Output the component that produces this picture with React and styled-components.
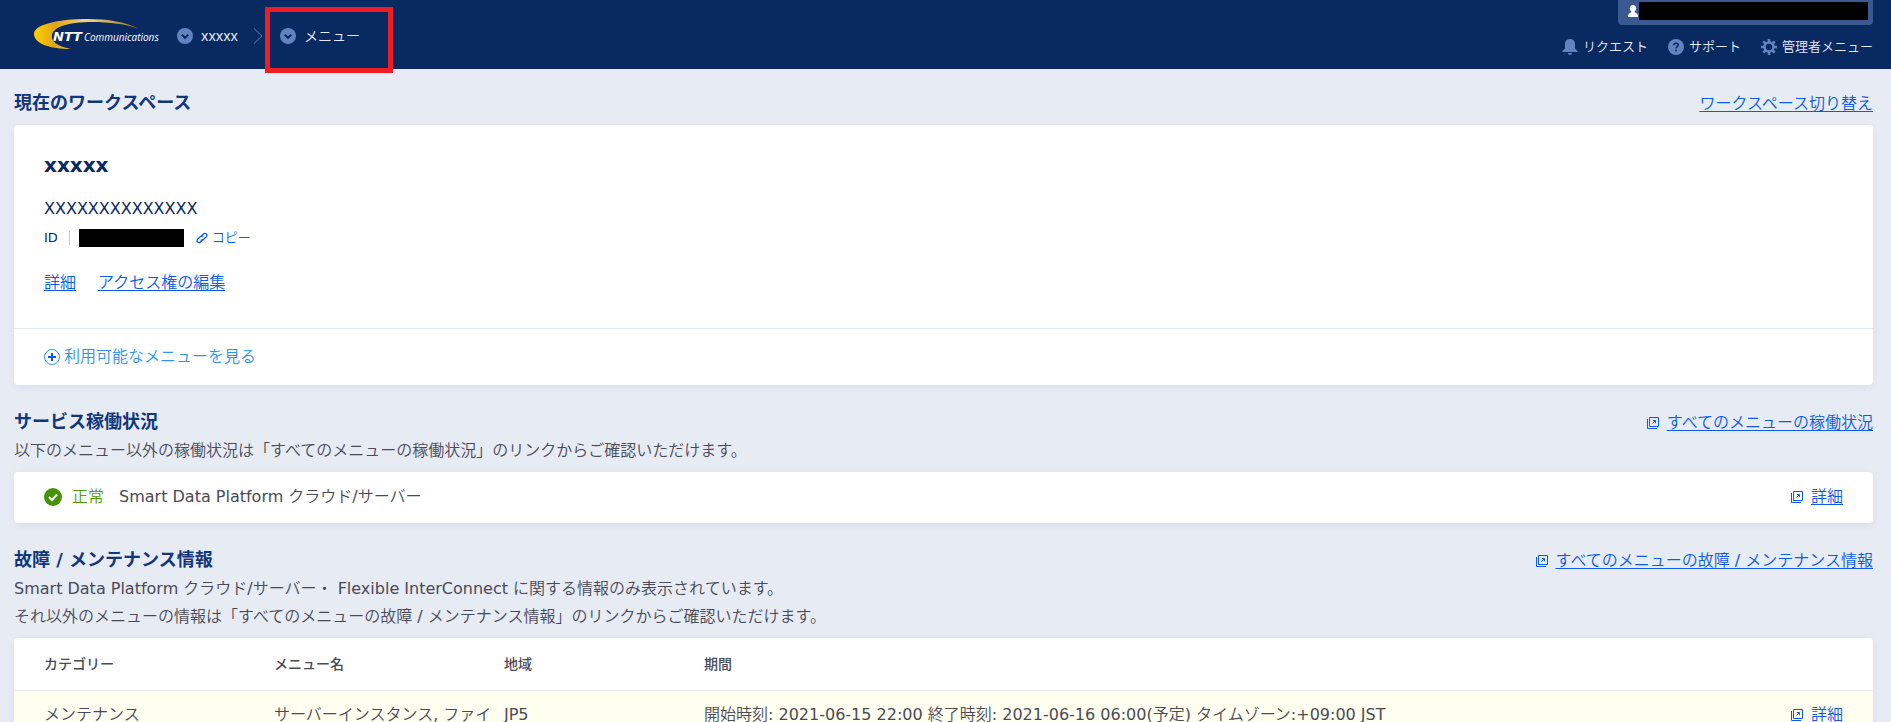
import React from 'react'
import styled, { createGlobalStyle } from 'styled-components'

const GlobalStyle = createGlobalStyle`
  * {
    box-sizing: border-box;
  }
  body {
    margin: 0;
    overflow-x: hidden;
    background-color: #e6ebf4;
    color: #4a4a57;
    font-family: 'DejaVu Sans', 'Noto Sans CJK JP DemiLight', 'Noto Sans CJK JP', sans-serif;
    font-size: 16px;
    font-weight: 400;
    line-height: 28px;
  }
  h1, h2, p {
    margin: 0;
  }
`

const boldFont = "'DejaVu Sans', 'Noto Sans CJK JP', sans-serif"

const Header = styled.header`
  display: flex;
  justify-content: space-between;
  height: 69px;
  padding: 0 18px 0 32px;
  background-color: #092961;
`
const Breadcrumb = styled.nav`
  display: flex;
  align-items: center;
  padding-top: 3px;
`
const Logo = styled.svg`
  width: 128px;
  height: 36px;
  margin: 0 17px 4px 0;
`
const CrumbButton = styled.button`
  display: flex;
  align-items: center;
  gap: 8px;
  padding: 0;
  border: 0;
  background: none;
  color: #e6ebf4;
  font-family: 'Noto Sans', 'Noto Sans CJK JP DemiLight', 'Noto Sans CJK JP', sans-serif;
  font-size: 14px;
  line-height: 20px;
  cursor: pointer;
`
const Separator = styled.svg`
  width: 10px;
  height: 16px;
  margin: 0 2px 0 15px;
`
const Highlight = styled.div`
  display: flex;
  align-items: center;
  width: 128px;
  height: 66px;
  padding: 0 0 8px 10px;
  margin-top: 8px;
  border: 5px solid #ee1c24;
  z-index: 1;
`
const HeaderRight = styled.div`
  display: flex;
  flex-direction: column;
  align-items: flex-end;
  gap: 11px;
`
const UserBox = styled.div`
  display: flex;
  align-items: flex-start;
  width: 255px;
  height: 25px;
  padding: 2px 5px 0 10px;
  border-radius: 0 0 4px 4px;
  background-color: #3a5990;
`
const UserIcon = styled.svg`
  width: 11px;
  height: 18px;
`
const Masked = styled.span`
  flex: ${(props) => (props.$width ? 'none' : 1)};
  width: ${(props) => props.$width};
  height: 18px;
  background-color: #000;
`
const Tools = styled.nav`
  display: flex;
  gap: 20px;
`
const Tool = styled.a`
  display: flex;
  align-items: center;
  gap: 5px;
  color: #e6ebf4;
  font-size: 13px;
  line-height: 22px;
  text-decoration: none;
`
const Icon = styled.svg`
  flex: none;
  width: ${(props) => props.$size || 16}px;
  height: ${(props) => props.$size || 16}px;
`

const Main = styled.main`
  padding: 19px 18px 0 14px;
`
const Section = styled.section`
  margin-bottom: 22px;
`
const SectionHead = styled.div`
  display: flex;
  align-items: flex-end;
  justify-content: space-between;
  min-height: 30px;
`
const Title = styled.h1`
  color: #12367c;
  font-family: ${boldFont};
  font-size: 18px;
  font-weight: 700;
  line-height: 28px;
  margin-bottom: 1px;
`
const Lead = styled.p`
  margin-bottom: 7px;
`
const Card = styled.div`
  margin-top: ${(props) => props.$top || 0};
  border-radius: 4px;
  background-color: #fff;
  box-shadow: 0 2px 8px rgba(9, 41, 97, 0.06);
  overflow: hidden;
`
const LinkGroup = styled.span`
  display: inline-flex;
  align-items: center;
  gap: 8px;
`
const Link = styled.a`
  color: #0b5be8;
  text-decoration: underline;
  text-underline-offset: 2px;
`

const WorkspaceBody = styled.div`
  padding: 26px 30px 31px;
`
const WorkspaceName = styled.h2`
  margin-bottom: 15px;
  color: #092961;
  font-family: ${boldFont};
  font-size: 20px;
  font-weight: 700;
  line-height: 28px;
`
const WorkspaceText = styled.p`
  color: #092961;
  line-height: 30px;
`
const IdRow = styled.div`
  display: flex;
  align-items: center;
  margin-bottom: 17px;
  color: #092961;
  font-size: 13px;
`
const IdLabel = styled.span`
  padding-right: 11px;
  margin-right: 9px;
  border-right: 1px solid #c4c9d2;
  line-height: 14px;
`
const CopyButton = styled.button`
  display: flex;
  align-items: center;
  gap: 4px;
  padding: 0;
  margin-left: 12px;
  border: 0;
  background: none;
  color: #0b5be8;
  font: inherit;
  cursor: pointer;
`
const WorkspaceLinks = styled.div`
  display: flex;
  gap: 22px;
`
const WorkspaceFoot = styled.div`
  display: flex;
  padding: 14px 30px;
  border-top: 1px solid #e6ebf4;
`
const MenuLink = styled.a`
  display: flex;
  align-items: center;
  gap: 4px;
  color: #2b95ee;
  text-decoration: none;
`

const StatusRow = styled.div`
  display: flex;
  align-items: center;
  justify-content: space-between;
  padding: 11px 30px 12px;
`
const Status = styled.div`
  display: flex;
  align-items: center;
`
const StatusLabel = styled.span`
  margin: 0 15px 0 10px;
  color: #4c9e08;
`

const Table = styled.table`
  width: 100%;
  border-collapse: collapse;
  table-layout: fixed;
`
const HeadCell = styled.th`
  width: ${(props) => props.$width};
  padding: 12px 0 12px ${(props) => (props.$first ? '30px' : '0')};
  font-family: ${boldFont};
  font-size: 14px;
  font-weight: 500;
  text-align: left;
`
const Row = styled.tr`
  border-top: 1px solid #e6ebf4;
  background-color: #fffff0;
`
const Cell = styled.td`
  padding: ${(props) => (props.$first ? '10px 0 10px 30px' : '10px 0')};
  vertical-align: top;
`
const LinkCell = styled(Cell)`
  padding-right: 30px;
  text-align: right;
`

const columns = [
  { label: 'カテゴリー', width: '260px' },
  { label: 'メニュー名', width: '230px' },
  { label: '地域', width: '200px' },
  { label: '期間' },
]

const incidents = [
  {
    id: 1,
    category: 'メンテナンス',
    menu: 'サーバーインスタンス, ファイ',
    region: 'JP5',
    period:
      '開始時刻: 2021-06-15 22:00 終了時刻: 2021-06-16 06:00(予定) タイムゾーン:+09:00 JST',
  },
]

const CircleDown = () => (
  <Icon viewBox='0 0 16 16' aria-hidden='true'>
    <circle cx='8' cy='8' r='8' fill='#6283bf' />
    <path d='M4.8 6.8 8 9.8l3.2-3' fill='none' stroke='#092961' strokeWidth='2' />
  </Icon>
)

const ExternalLink = ({ children }) => (
  <LinkGroup>
    <Icon $size={12} viewBox='0 0 12 12' fill='none' stroke='#0b5be8' aria-hidden='true'>
      <path d='M2.5.5h9v9h-9zM.5 2v9.5H10' />
      <path d='M5.500 6.500 8 4M5.800 3.500h2.700v2.700' />
    </Icon>
    <Link href='#'>{children}</Link>
  </LinkGroup>
)

const BrandLogo = () => (
  <Logo viewBox='0 0 128 36' role='img' aria-label='NTT Communications'>
    <defs>
      <linearGradient id='swoosh' x1='0' y1='0' x2='1' y2='0'>
        <stop offset='0' stopColor='#ffd200' />
        <stop offset='0.2' stopColor='#e0a316' />
        <stop offset='0.5' stopColor='#f3d48c' />
        <stop offset='1' stopColor='#a87410' />
      </linearGradient>
    </defs>
    <path
      d='M107 13C94 6 76 3 56 3 24 3 2 9 2 18c0 8 12 15 37 15-15-3-20-8-19-14C22 10 38 6 60 6c18 0 34 2 47 7z'
      fill='url(#swoosh)'
    />
    <text x='21' y='25' fill='#fff' fontFamily='DejaVu Sans, sans-serif' fontSize='13' fontWeight='700' fontStyle='italic'>
      NTT
    </text>
    <text x='52' y='25' fill='#fff' fontFamily='Open Sans, sans-serif' fontSize='10' fontWeight='500' fontStyle='italic'>
      Communications
    </text>
  </Logo>
)

const HeaderBar = () => (
  <Header>
    <Breadcrumb>
      <BrandLogo />
      <CrumbButton>
        <CircleDown />
        xxxxx
      </CrumbButton>
      <Separator viewBox='0 0 10 16' aria-hidden='true'>
        <path d='M1 .5 9 8l-8 7.5' fill='none' stroke='#5f83c2' />
      </Separator>
      <Highlight>
        <CrumbButton>
          <CircleDown />
          メニュー
        </CrumbButton>
      </Highlight>
    </Breadcrumb>
    <HeaderRight>
      <UserBox>
        <UserIcon viewBox='0 0 11 18' fill='#fff' aria-hidden='true'>
          <path d='M5 3c2 0 3.200 1.300 3.200 3.200 0 1.300-.6 2.400-1.400 3V10.500C8.800 11 10 12 10 15H0c0-3 1.200-4 3.200-4.500V9.200c-.8-.6-1.400-1.700-1.400-3C1.800 4.300 3 3 5 3z' />
        </UserIcon>
        <Masked />
      </UserBox>
      <Tools>
        <Tool href='#'>
          <Icon viewBox='0 0 16 16' fill='#6283bf' aria-hidden='true'>
            <path d='M8 0C5 0 3 2.200 3 5v4.500L.5 12v1h15v-1L13 9.500V5c0-2.800-2-5-5-5zM6 14h4c0 1.200-.8 2-2 2s-2-.8-2-2z' />
          </Icon>
          リクエスト
        </Tool>
        <Tool href='#'>
          <Icon viewBox='0 0 16 16' aria-hidden='true'>
            <circle cx='8' cy='8' r='8' fill='#6283bf' />
            <path d='M5.800 6.300C5.900 4.900 6.800 4.200 8 4.200s2.300.7 2.300 1.900C10.300 7.600 8 7.700 8 9.500' fill='none' stroke='#092961' strokeWidth='1.600' />
            <circle cx='8' cy='11.600' r='1' fill='#092961' />
          </Icon>
          サポート
        </Tool>
        <Tool href='#'>
          <Icon viewBox='0 0 16 16' fill='none' stroke='#6283bf' aria-hidden='true'>
            <circle cx='8' cy='8' r='4.500' strokeWidth='2.600' />
            <path
              d='M8 0v3M8 13v3M0 8h3M13 8h3M2.300 2.300l2.200 2.200M11.500 11.500l2.200 2.200M2.300 13.700l2.200-2.200M11.500 4.500l2.200-2.200'
              strokeWidth='2.600'
            />
          </Icon>
          管理者メニュー
        </Tool>
      </Tools>
    </HeaderRight>
  </Header>
)

const App = () => {
  return (
    <>
      <GlobalStyle />
      <HeaderBar />
      <Main>
        <Section>
          <SectionHead>
            <Title>現在のワークスペース</Title>
            <Link href='#'>ワークスペース切り替え</Link>
          </SectionHead>
          <Card $top='7px'>
            <WorkspaceBody>
              <WorkspaceName>xxxxx</WorkspaceName>
              <WorkspaceText>XXXXXXXXXXXXXX</WorkspaceText>
              <IdRow>
                <IdLabel>ID</IdLabel>
                <Masked $width='105px' />
                <CopyButton>
                  <Icon $size={12} viewBox='0 0 12 12' fill='none' stroke='#0b5be8' strokeWidth='1.300' aria-hidden='true'>
                    <path d='M5 4.500 7.200 2.300c1-1 2.300-1.200 3.200-.4s.7 2.100-.3 3.100L7.400 7.500c-.9.900-2 .9-2.600.1' />
                    <path d='M7 7.500 4.800 9.700c-1 1-2.300 1.200-3.200.4s-.7-2.100.3-3.100l2.700-2.500c.9-.9 2-.9 2.600-.1' />
                  </Icon>
                  コピー
                </CopyButton>
              </IdRow>
              <WorkspaceLinks>
                <Link href='#'>詳細</Link>
                <Link href='#'>アクセス権の編集</Link>
              </WorkspaceLinks>
            </WorkspaceBody>
            <WorkspaceFoot>
              <MenuLink href='#'>
                <Icon viewBox='0 0 16 16' fill='none' aria-hidden='true'>
                  <circle cx='8' cy='8' r='7.500' stroke='#2b95ee' />
                  <path d='M8 4v8M4 8h8' stroke='#0b5be8' strokeWidth='2' />
                </Icon>
                利用可能なメニューを見る
              </MenuLink>
            </WorkspaceFoot>
          </Card>
        </Section>

        <Section>
          <SectionHead>
            <Title as='h2'>サービス稼働状況</Title>
            <ExternalLink>すべてのメニューの稼働状況</ExternalLink>
          </SectionHead>
          <Lead>以下のメニュー以外の稼働状況は「すべてのメニューの稼働状況」のリンクからご確認いただけます。</Lead>
          <Card>
            <StatusRow>
              <Status>
                <Icon $size={18} viewBox='0 0 18 18' aria-hidden='true'>
                  <circle cx='9' cy='9' r='9' fill='#479206' />
                  <path d='m5 9 3 3 5-5.500' fill='none' stroke='#fff' strokeWidth='2' />
                </Icon>
                <StatusLabel>正常</StatusLabel>
                Smart Data Platform クラウド/サーバー
              </Status>
              <ExternalLink>詳細</ExternalLink>
            </StatusRow>
          </Card>
        </Section>

        <Section>
          <SectionHead>
            <Title as='h2'>故障 / メンテナンス情報</Title>
            <ExternalLink>すべてのメニューの故障 / メンテナンス情報</ExternalLink>
          </SectionHead>
          <Lead>
            Smart Data Platform クラウド/サーバー・ Flexible InterConnect に関する情報のみ表示されています。
            <br />
            それ以外のメニューの情報は「すべてのメニューの故障 / メンテナンス情報」のリンクからご確認いただけます。
          </Lead>
          <Card>
            <Table>
              <thead>
                <tr>
                  {columns.map((column, index) => (
                    <HeadCell key={column.label} $width={column.width} $first={index === 0}>
                      {column.label}
                    </HeadCell>
                  ))}
                  <HeadCell as='td' $width='120px' />
                </tr>
              </thead>
              <tbody>
                {incidents.map((incident) => (
                  <Row key={incident.id}>
                    <Cell $first>{incident.category}</Cell>
                    <Cell>{incident.menu}</Cell>
                    <Cell>{incident.region}</Cell>
                    <Cell>{incident.period}</Cell>
                    <LinkCell>
                      <ExternalLink>詳細</ExternalLink>
                    </LinkCell>
                  </Row>
                ))}
              </tbody>
            </Table>
          </Card>
        </Section>
      </Main>
    </>
  )
}

export default App
